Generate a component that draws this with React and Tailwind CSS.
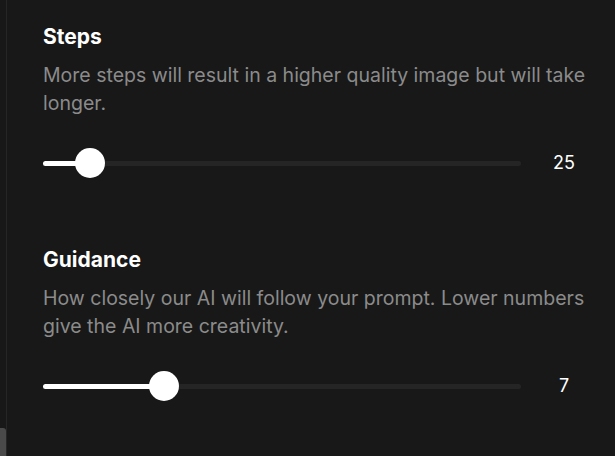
const settings = [
  {
    id: 'steps',
    title: 'Steps',
    description: 'More steps will result in a higher quality image but will take longer.',
    value: 25,
    pct: 9.83,
  },
  {
    id: 'guidance',
    title: 'Guidance',
    description: 'How closely our AI will follow your prompt. Lower numbers give the AI more creativity.',
    value: 7,
    pct: 25.3,
  },
];

const Slider = ({ pct }) => (
  <div className="relative flex-1 h-[30px] flex items-center">
    <div className="w-full h-[5px] rounded-full bg-[#252525]">
      <div className="h-full rounded-full bg-white" style={{ width: `${pct}%` }}></div>
    </div>
    <div
      className="absolute top-0 w-[30px] h-[30px] -ml-[15px] rounded-full bg-white"
      style={{ left: `${pct}%` }}
    ></div>
  </div>
);

const App = () => {
  return (
    <div
      className="flex h-[456px] w-[615px] overflow-hidden bg-[#181818]"
      style={{ fontFamily: 'Inter, "Liberation Sans", sans-serif' }}
    >
      <div className="w-[6px] flex flex-col justify-end">
        <div className="h-[28px] w-[6px] rounded-tr-[3px] bg-[#4a4a4a]"></div>
      </div>
      <div className="flex-1 border-l border-[#262626] pl-[36px] pr-2 pt-[23px]">
        <div className="flex flex-col gap-[68px]">
          {settings.map((s) => (
            <div key={s.id}>
              <h3 className="text-[21px] leading-7 font-bold text-white">{s.title}</h3>
              <p className="mt-2.5 text-[19.5px] leading-7 text-[#8b8b8b]">{s.description}</p>
              <div className="mt-[31px] flex items-center">
                <Slider pct={s.pct} />
                <div className="w-[86px] text-center text-lg text-white">{s.value}</div>
              </div>
            </div>
          ))}
        </div>
      </div>
    </div>
  );
};

export default App;
